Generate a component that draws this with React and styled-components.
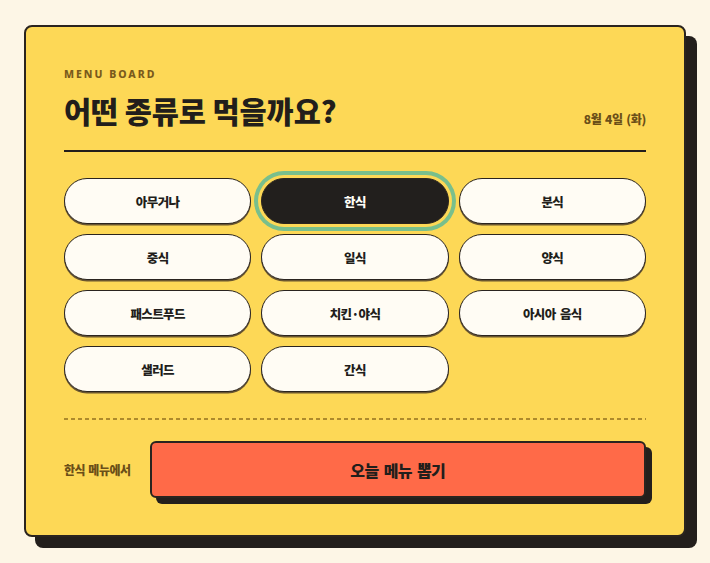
import React, { useState } from "react";
import styled, { createGlobalStyle } from "styled-components";

const CATEGORIES = [
  "아무거나",
  "한식",
  "분식",
  "중식",
  "일식",
  "양식",
  "패스트푸드",
  "치킨·야식",
  "아시아 음식",
  "샐러드",
  "간식",
];

const GlobalStyle = createGlobalStyle`
  html, body {
    margin: 0;
    background: #fdf6e6;
  }
  body {
    font-family: "Noto Sans CJK KR", "Noto Sans", sans-serif;
    color: #221e1b;
  }
  * {
    box-sizing: border-box;
  }
`;

const Page = styled.div`
  padding: 25px 24px;
`;

const Board = styled.section`
  width: 662px;
  background: #fdd856;
  border: 2px solid #2a241f;
  border-radius: 8px;
  box-shadow: 11px 11px 0 #231f1c;
  padding: 40px 38px 37px;
`;

const Header = styled.header`
  display: flex;
  justify-content: space-between;
  align-items: flex-end;
  padding-bottom: 23px;
  border-bottom: 2px solid #221e1b;
`;

const Eyebrow = styled.div`
  font-family: "Noto Sans", sans-serif;
  font-size: 10.5px;
  line-height: 14px;
  font-weight: 800;
  letter-spacing: 2px;
  color: #7a5a1c;
`;

const Title = styled.h1`
  margin: 12px 0 0;
  font-size: 29.5px;
  line-height: 34px;
  font-weight: 900;
  letter-spacing: -0.1px;
  color: #221e1b;
`;

const DateLabel = styled.div`
  font-size: 12px;
  line-height: 16px;
  font-weight: 800;
  letter-spacing: -0.3px;
  word-spacing: 1px;
  color: #6b4f18;
`;

const Grid = styled.div`
  display: grid;
  grid-template-columns: repeat(3, 1fr);
  gap: 10px;
  margin-top: 26px;
`;

const Chip = styled.button`
  height: 46px;
  border-radius: 999px;
  border: 1.5px solid #2a241f;
  background: ${(p) => (p.$active ? "#221f1d" : "#fffcf4")};
  color: ${(p) => (p.$active ? "#fffdf6" : "#221e1b")};
  box-shadow: ${(p) =>
    p.$active
      ? "0 0 0 3px #fdd856, 0 0 0 7px #79bf8c"
      : "0 1.5px 0 #6a5630"};
  font-family: inherit;
  font-size: 12.5px;
  font-weight: 800;
  letter-spacing: -0.6px;
  word-spacing: 2px;
  cursor: pointer;
`;

/* fine dashed rule between the grid and the footer */
const Divider = styled.div`
  height: 2px;
  margin-top: 26px;
  background-image: repeating-linear-gradient(
    to right,
    #ad8a2c 0 4px,
    transparent 4px 7px
  );
`;

const Footer = styled.div`
  display: flex;
  align-items: center;
  gap: 19px;
  margin-top: 21px;
`;

const FooterNote = styled.span`
  font-size: 12px;
  font-weight: 800;
  letter-spacing: -0.5px;
  word-spacing: 1px;
  color: #6b4f18;
  white-space: nowrap;
`;

const PickButton = styled.button`
  flex: 1;
  height: 57px;
  background: #ff6a48;
  border: 2px solid #2a241f;
  border-radius: 6px;
  box-shadow: 6px 6px 0 #231f1c;
  font-family: inherit;
  font-size: 16px;
  font-weight: 900;
  letter-spacing: -0.6px;
  word-spacing: 2px;
  color: #221e1b;
  cursor: pointer;
`;

export default function App() {
  const [selected, setSelected] = useState("한식");

  return (
    <Page>
      <GlobalStyle />
      <Board>
        <Header>
          <div>
            <Eyebrow>MENU BOARD</Eyebrow>
            <Title>어떤 종류로 먹을까요?</Title>
          </div>
          <DateLabel>8월 4일 (화)</DateLabel>
        </Header>

        <Grid>
          {CATEGORIES.map((name) => (
            <Chip
              key={name}
              $active={name === selected}
              onClick={() => setSelected(name)}
            >
              {name}
            </Chip>
          ))}
        </Grid>

        <Divider />

        <Footer>
          <FooterNote>{selected} 메뉴에서</FooterNote>
          <PickButton>오늘 메뉴 뽑기</PickButton>
        </Footer>
      </Board>
    </Page>
  );
}
